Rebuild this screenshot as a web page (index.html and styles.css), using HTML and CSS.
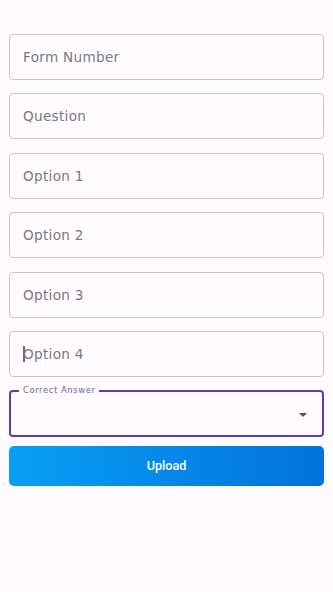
FILE: index.html
```html
<!DOCTYPE html>
<html>
<head>
<meta charset="utf-8">
<link rel="stylesheet" href="styles.css">
</head>
<body>
<div class="form">
  <div class="field"><span class="ph">Form Number</span></div>
  <div class="field"><span class="ph">Question</span></div>
  <div class="field"><span class="ph">Option 1</span></div>
  <div class="field"><span class="ph">Option 2</span></div>
  <div class="field"><span class="ph">Option 3</span></div>
  <div class="field focus"><span class="caret"></span><span class="ph">Option 4</span></div>
  <div class="select">
    <span class="label">Correct Answer</span>
    <svg class="arrow" width="8" height="4" viewBox="0 0 8 4"><path d="M0 0 L8 0 L4 4 Z" fill="#5b3fa8"/></svg>
  </div>
  <button class="upload">Upload</button>
</div>
</body>
</html>
```
FILE: styles.css
```css
html, body {
  margin: 0;
  padding: 0;
  background: #fffbfe;
}
body {
  width: 333px;
  height: 592px;
  font-family: "DejaVu Sans", sans-serif;
}
.form {
  display: flex;
  flex-direction: column;
  padding: 34px 9px 0 9px;
  gap: 13.4px;
}
.field {
  height: 46px;
  box-sizing: border-box;
  border: 1px solid #c8c6ca;
  border-radius: 4px;
  display: flex;
  align-items: center;
  padding-left: 13px;
}
.ph {
  font-size: 13.6px;
  color: #7a7880;
  letter-spacing: 0.3px;
}
.focus .caret {
  width: 1.5px;
  height: 16px;
  background: #6b5fa8;
  margin-right: -1.5px;
}
.select {
  position: relative;
  height: 47px;
  box-sizing: border-box;
  border: 2px solid #5f3cb0;
  border-radius: 4px;
  margin-bottom: -5px;
}
.label {
  position: absolute;
  top: -7px;
  left: 8px;
  padding: 0 4px;
  background: #fffbfe;
  font-size: 8.4px;
  color: #6e63a6;
  letter-spacing: 0.6px;
  line-height: 11px;
}
.arrow {
  position: absolute;
  right: 15px;
  top: 21px;
}
.upload {
  height: 40px;
  border: none;
  border-radius: 5px;
  background: linear-gradient(90deg, #089ff6, #0272dd);
  color: #fff;
  font-family: Roboto, sans-serif;
  font-weight: 500;
  font-size: 12.6px;
  padding: 0;
}
```
